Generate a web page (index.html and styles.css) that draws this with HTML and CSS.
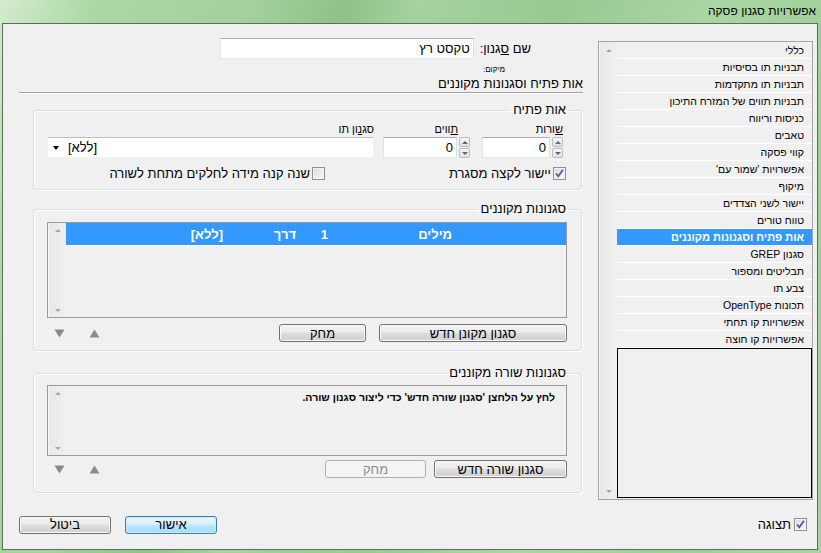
FILE: index.html
```html
<!DOCTYPE html>
<html lang="he" dir="rtl">
<head>
<meta charset="utf-8">
<title>אפשרויות סגנון פסקה</title>
<link rel="stylesheet" href="styles.css">
</head>
<body>
<div class="window">
  <div class="titlebar"><span class="title">אפשרויות סגנון פסקה</span></div>
  <div class="client">
    <div class="main">
      <div class="sidebar">
        <div class="sb-list">
          <div class="sb-item">כללי</div>
          <div class="sb-item">תבניות תו בסיסיות</div>
          <div class="sb-item">תבניות תו מתקדמות</div>
          <div class="sb-item">תבניות תווים של המזרח התיכון</div>
          <div class="sb-item">כניסות וריווח</div>
          <div class="sb-item">טאבים</div>
          <div class="sb-item">קווי פסקה</div>
          <div class="sb-item">אפשרויות 'שמור עם'</div>
          <div class="sb-item">מיקוף</div>
          <div class="sb-item">יישור לשני הצדדים</div>
          <div class="sb-item">טווח טורים</div>
          <div class="sb-item sel">אות פתיח וסגנונות מקוננים</div>
          <div class="sb-item">סגנון GREP</div>
          <div class="sb-item">תבליטים ומספור</div>
          <div class="sb-item">צבע תו</div>
          <div class="sb-item">תכונות OpenType</div>
          <div class="sb-item">אפשרויות קו תחתי</div>
          <div class="sb-item">אפשרויות קו חוצה</div>
          <div class="sb-empty"></div>
        </div>
        <div class="vscroll"><span class="mini-up"></span><span class="mini-down"></span></div>
      </div>

      <div class="content">
        <div class="name-row">
          <span class="lbl">שם <u>ס</u>גנון:</span>
          <div class="textbox name-box">טקסט רץ</div>
        </div>
        <div class="location">מיקום:</div>
        <div class="heading">אות פתיח וסגנונות מקוננים</div>
        <div class="sep"></div>

        <fieldset class="group g1">
          <legend>אות פתיח</legend>
          <div class="fields">
            <div class="field f-lines">
              <div class="flabel"><u>ש</u>ורות</div>
              <div class="spin">
                <div class="spinbtns"><span class="sbtn up"></span><span class="sbtn down"></span></div>
                <div class="textbox num">0</div>
              </div>
            </div>
            <div class="field f-chars">
              <div class="flabel pad"><u>ת</u>ווים</div>
              <div class="spin">
                <div class="spinbtns"><span class="sbtn up"></span><span class="sbtn down"></span></div>
                <div class="textbox num">0</div>
              </div>
            </div>
            <div class="field f-style">
              <div class="flabel">סג<u>נ</u>ון תו</div>
              <div class="textbox combo"><span class="combo-text">[ללא]</span><span class="combo-arrow"></span></div>
            </div>
          </div>
          <div class="checks">
            <label class="check c1">
              <span class="cb"><svg width="11" height="11" viewBox="0 0 11 11"><path d="M2 5.5 L4.3 8.3 L9 1.8" fill="none" stroke="#4b5f9e" stroke-width="1.8"/></svg></span>
              <span>יישור לקצה מסגרת</span>
            </label>
            <label class="check">
              <span class="cb"></span>
              <span>שנה קנה מידה לחלקים מתחת לשורה</span>
            </label>
          </div>
        </fieldset>

        <fieldset class="group g2">
          <legend>סגנונות מקוננים</legend>
          <div class="listbox lb1">
            <div class="lb-rows">
              <div class="lb-row sel">
                <span class="col c-a">מילים</span>
                <span class="col c-b">1</span>
                <span class="col c-c">דרך</span>
                <span class="col c-d">[ללא]</span>
              </div>
            </div>
            <div class="vscroll"><span class="mini-up"></span><span class="mini-down"></span></div>
          </div>
          <div class="btn-row">
            <div class="btn b-new1">סגנון מקונן חדש</div>
            <div class="btn b-del1">מחק</div>
            <div class="arrows">
              <svg class="arr" width="11" height="9" viewBox="0 0 11 9"><polygon points="5.5,0.5 10.5,8.5 0.5,8.5" fill="#8a8a8a"/></svg>
              <svg class="arr" width="11" height="9" viewBox="0 0 11 9"><polygon points="0.5,0.5 10.5,0.5 5.5,8.5" fill="#8a8a8a"/></svg>
            </div>
          </div>
        </fieldset>

        <fieldset class="group g3">
          <legend>סגנונות שורה מקוננים</legend>
          <div class="listbox lb2">
            <div class="lb-rows">
              <div class="hint">לחץ על הלחצן 'סגנון שורה חדש' כדי ליצור סגנון שורה.</div>
            </div>
            <div class="vscroll"><span class="mini-up"></span><span class="mini-down"></span></div>
          </div>
          <div class="btn-row">
            <div class="btn b-new2">סגנון שורה חדש</div>
            <div class="btn b-del2 disabled">מחק</div>
            <div class="arrows">
              <svg class="arr" width="11" height="9" viewBox="0 0 11 9"><polygon points="5.5,0.5 10.5,8.5 0.5,8.5" fill="#8a8a8a"/></svg>
              <svg class="arr" width="11" height="9" viewBox="0 0 11 9"><polygon points="0.5,0.5 10.5,0.5 5.5,8.5" fill="#8a8a8a"/></svg>
            </div>
          </div>
        </fieldset>
      </div>
    </div>

    <div class="footer">
      <label class="check preview">
        <span class="cb"><svg width="11" height="11" viewBox="0 0 11 11"><path d="M2 5.5 L4.3 8.3 L9 1.8" fill="none" stroke="#4b5f9e" stroke-width="1.8"/></svg></span>
        <span>תצוגה</span>
      </label>
      <div class="btn fbtn default">אישור</div>
      <div class="btn fbtn">ביטול</div>
    </div>
  </div>
</div>
</body>
</html>
```
FILE: styles.css
```css
* { box-sizing: border-box; }
html, body { margin: 0; padding: 0; }
body {
  width: 821px;
  height: 553px;
  overflow: hidden;
  font-family: "Liberation Sans", Arial, sans-serif;
  font-size: 11px;
  color: #000;
  background: #9fd098;
}
u { text-decoration: underline; text-underline-offset: 1px; }

.window {
  width: 821px;
  height: 553px;
  display: flex;
  flex-direction: column;
  background: linear-gradient(110deg, #d3ebce 0%, #aad7a3 10%, #a2d19b 25%, #8ec287 34%, #a4d39d 41%, #98ca91 55%, #a9d6a2 70%, #9ecf97 85%, #a7d4a0 100%);
}

.titlebar {
  height: 23px;
  flex: none;
  display: flex;
  align-items: center;
  padding: 0 5px 1px 0;
  font-size: 12px;
  color: #000;
}

.client {
  flex: none;
  height: 527px;
  margin: 0 3px 0 2px;
  border: 1px solid #5d6f5b;
  background: #f0f0f0;
  display: flex;
  flex-direction: column;
}

.main {
  height: 476px;
  flex: none;
  display: flex;
  gap: 15px;
  padding: 14px 4px 0 16px;
}

/* ---------- sidebar ---------- */
.sidebar {
  width: 215px;
  flex: none;
  margin-top: 3px;
  height: 459px;
  border: 1px solid #a3a3a3;
  display: flex;
  background: #f0f0f0;
}
.sb-list {
  flex: 1;
  display: flex;
  flex-direction: column;
}
.sb-item {
  height: 17px;
  line-height: 16px;
  border-bottom: 1px solid #ffffff;
  padding-right: 8px;
  white-space: nowrap;
  font-size: 10.5px;
}
.sb-item.sel {
  background: #3399ff;
  color: #fff;
  font-weight: bold;
  font-size: 11px;
}
.sb-empty {
  flex: 1;
  border: 1px solid #000;
  margin-bottom: 1px;
}

.vscroll {
  width: 18px;
  flex: none;
  display: flex;
  flex-direction: column;
  justify-content: space-between;
  align-items: center;
  padding: 7px 0 6px;
  background: linear-gradient(to right, #e9e9e9, #efefef);
  border-left: 1px solid #f7f7f7;
}
.mini-up, .mini-down {
  width: 0;
  height: 0;
  border-left: 3px solid transparent;
  border-right: 3px solid transparent;
}
.mini-up { border-bottom: 3px solid #a6a6a6; }
.mini-down { border-top: 3px solid #a6a6a6; }

/* ---------- content ---------- */
.content {
  flex: 1;
  display: flex;
  flex-direction: column;
}
.name-row {
  height: 21px;
  display: flex;
  align-items: center;
  gap: 6px;
  padding-right: 52px;
  font-size: 13px;
}
.textbox {
  background: #fff;
  border: 1px solid;
  border-color: #abadb3 #dbdfe6 #e3e9ef #e2e3ea;
  font-size: 13px;
}
.name-box {
  width: 254px;
  height: 21px;
  line-height: 19px;
  padding-right: 3px;
}
.location {
  margin-top: 5px;
  font-size: 8px;
  line-height: 11px;
  padding-right: 78px;
}
.heading {
  margin-top: 2px;
  font-size: 13px;
  line-height: 14px;
}
.sep {
  margin-top: 1px;
  height: 2px;
  border-top: 1px solid #a0a0a0;
  border-bottom: 1px solid #ffffff;
}

.group {
  margin: 0 1px 0 14px;
  padding: 0 14px 0 13px;
  border: 1px solid #d5dfe5;
  border-radius: 3px;
  box-shadow: inset 1px 1px 0 #fff, 1px 1px 0 #fff;
  min-width: 0;
}
.group legend {
  font-size: 13px;
  line-height: 14px;
  padding: 0 3px;
  margin-right: -2px;
}

.g1 { margin-top: 9px; padding-bottom: 8px; padding-right: 18px; }
.g1 legend { margin-right: -6px; }
.fields {
  display: flex;
  gap: 12px;
  padding-top: 5px;
}
.field { display: flex; flex-direction: column; }
.flabel {
  font-size: 11px;
  line-height: 14px;
  height: 15px;
}
.flabel.pad { padding-right: 12px; }
.f-style { flex: 1; margin-right: -3px; }
.spin {
  display: flex;
  gap: 2px;
}
.spinbtns {
  width: 11px;
  height: 21px;
  display: flex;
  flex-direction: column;
  gap: 1px;
}
.sbtn {
  flex: 1;
  border: 1px solid #bcbcbc;
  border-radius: 2px;
  background: linear-gradient(#f7f7f7, #e2e2e2);
  display: flex;
  align-items: center;
  justify-content: center;
}
.sbtn::after {
  content: "";
  width: 0;
  height: 0;
  border-left: 3px solid transparent;
  border-right: 3px solid transparent;
}
.sbtn.up::after { border-bottom: 3px solid #56678f; }
.sbtn.down::after { border-top: 3px solid #56678f; }
.num {
  height: 21px;
  line-height: 19px;
  padding-right: 3px;
}
.f-lines .num { width: 68px; }
.f-chars .num { width: 74px; }
.combo {
  height: 21px;
  display: flex;
  align-items: center;
  justify-content: flex-end;
  gap: 9px;
  padding-left: 5px;
  border-color: #bdbdbd #f0f0f0 #f0f0f0 #f0f0f0;
}
.combo-arrow {
  width: 0;
  height: 0;
  border-left: 3.5px solid transparent;
  border-right: 3.5px solid transparent;
  border-top: 4px solid #000;
}

.checks {
  display: flex;
  margin-top: 8px;
  margin-right: -3px;
  height: 15px;
  align-items: center;
}
.check {
  display: flex;
  align-items: center;
  gap: 2px;
  font-size: 13px;
  white-space: nowrap;
}
.check.c1 { width: 241px; }
.cb {
  width: 13px;
  height: 13px;
  flex: none;
  border: 1px solid #8e8f8f;
  background: linear-gradient(135deg, #d8d8d8, #fbfbfb);
  box-shadow: inset 0 0 0 1px #f4f4f4;
  display: flex;
  align-items: center;
  justify-content: center;
}

.g2 { margin-top: 12px; padding-bottom: 8px; }
.g3 { margin-top: 15px; padding-bottom: 14px; }
.g2 .listbox { margin-top: 6px; height: 96px; }
.g3 .listbox { margin-top: 5px; height: 71px; }
.g3 .btn-row { margin-top: 4px; }

.listbox {
  border: 1px solid #9a9a9a;
  background: #f0f0f0;
  display: flex;
}
.listbox .vscroll { padding: 6px 0 5px; }
.lb-rows { flex: 1; }
.lb-row {
  height: 23px;
  border-bottom: 1px solid #fff;
  display: flex;
  align-items: center;
  padding-right: 114px;
  font-size: 13px;
  font-weight: bold;
}
.lb-row.sel { background: #3399ff; color: #fff; }
.col { flex: none; }
.c-a { width: 124px; }
.c-b { width: 32px; }
.c-c { width: 73px; }
.hint {
  font-weight: bold;
  font-size: 10.5px;
  padding: 4px 11px 0 0;
  line-height: 14px;
}

.btn-row {
  margin-top: 6px;
  display: flex;
  gap: 13px;
  align-items: center;
}
.btn {
  height: 18px;
  border: 1px solid #707070;
  border-radius: 3px;
  background: linear-gradient(#f2f2f2 0%, #ebebeb 45%, #dddddd 50%, #cfcfcf 100%);
  box-shadow: inset 0 0 0 1px #fbfbfb;
  display: flex;
  align-items: center;
  justify-content: center;
  font-size: 13px;
  flex: none;
}
.btn.disabled {
  border-color: #adb2b5;
  background: #f4f4f4;
  box-shadow: none;
  color: #8c8c8c;
}
.b-new1 { width: 188px; }
.b-del1 { width: 87px; }
.b-new2 { width: 133px; margin-left: -5px; }
.b-del2 { width: 101px; }
.arrows {
  margin-right: auto;
  display: flex;
  gap: 24px;
  padding-left: 7px;
}
.arr { display: block; }

/* ---------- footer ---------- */
.footer {
  flex: 1;
  display: flex;
  align-items: center;
  padding: 0 10px 0 16px;
  gap: 14px;
}
.preview { margin-left: auto; gap: 3px; }
.fbtn { width: 92px; }
.btn.default {
  border-color: #3c7fb1;
  background: linear-gradient(#eaf6fd 0%, #d9f0fc 45%, #bee6fd 50%, #a7d9f5 100%);
  box-shadow: inset 0 0 0 1px #cdeafa;
}
```
